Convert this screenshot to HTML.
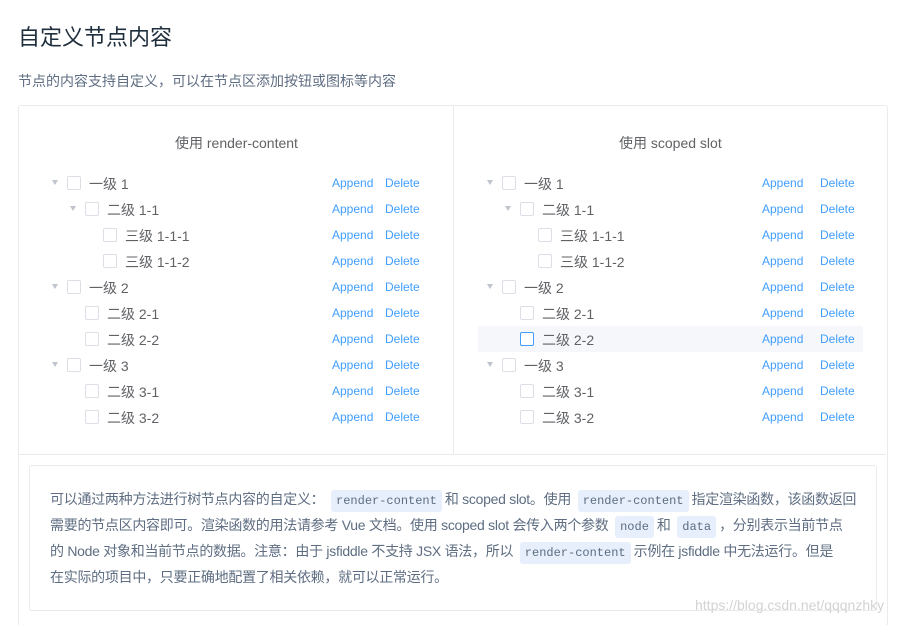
<!DOCTYPE html><html><head><meta charset="utf-8"><style>
html,body{margin:0;width:918px;height:625px;overflow:hidden}
body{background:#fff;font-family:"Liberation Sans","Noto Sans CJK SC",sans-serif;color:#606266;position:relative}
.a{position:absolute;white-space:nowrap}
h1{position:absolute;left:18px;top:20px;margin:0;font-size:22px;font-weight:normal;color:#1f2f3d}
.sub{left:18px;top:71px;font-size:14px;color:#5e6d82}
.box{position:absolute;left:18px;top:105px;width:868px;height:530px;border:1px solid #ebebeb;border-radius:3px}
.vd{position:absolute;left:453px;top:106px;width:1px;height:348px;background:#ebebeb}
.hd{position:absolute;left:19px;top:454px;width:867px;height:1px;background:#ebebeb}
.hdr{font-size:14px;top:133px;color:#606266}
.tri{position:absolute;width:0;height:0;border-left:3.5px solid transparent;border-right:3.5px solid transparent;border-top:5px solid #c0c4cc}
.cb{position:absolute;width:12px;height:12px;border:1px solid #dcdfe6;border-radius:2px;background:#fff}
.t{font-size:14px;color:#606266}
.l{font-size:12px;color:#409eff}
.tip{position:absolute;left:29px;top:465px;width:846px;height:144px;border:1px solid #ebebeb;border-radius:3px;background:#fff}
.tx{position:absolute;left:50px;top:486px;width:820px;font-size:14px;line-height:26px;color:#5e6d82;letter-spacing:-0.28px;white-space:nowrap}
code{font-family:"Liberation Mono",monospace;font-size:12px;background:#e6effb;color:#5e6d82;padding:4px 5px;border-radius:3px;margin:0 3px;line-height:1;letter-spacing:0}
</style></head><body>
<h1>自定义节点内容</h1>
<div class="a sub">节点的内容支持自定义，可以在节点区添加按钮或图标等内容</div>
<div class="box"></div><div class="vd"></div><div class="hd"></div>
<div class="a hdr" style="left:175px">使用 render-content</div>
<div class="a hdr" style="left:619px">使用 scoped slot</div>
<div style="position:absolute;left:478px;top:326px;width:385px;height:26px;background:#f5f7fa"></div>
<div class="tip"></div>
<div class="tx">可以通过两种方法进行树节点内容的自定义： <code>render-content</code>和 scoped slot。使用 <code>render-content</code>指定渲染函数，该函数返回<br>需要的节点区内容即可。渲染函数的用法请参考 Vue 文档。使用 scoped slot 会传入两个参数 <code>node</code>和 <code>data</code>，分别表示当前节点<br>的 Node 对象和当前节点的数据。注意：由于 jsfiddle 不支持 JSX 语法，所以 <code>render-content</code>示例在 jsfiddle 中无法运行。但是<br>在实际的项目中，只要正确地配置了相关依赖，就可以正常运行。</div>
<div class="a" style="left:695px;top:597px;font-size:14px;color:rgba(200,200,200,.8)">https://blog.csdn.net/qqqnzhky</div>
<script>
var rows=[[0,'一级 1',1],[1,'二级 1-1',1],[2,'三级 1-1-1',0],[2,'三级 1-1-2',0],[0,'一级 2',1],[1,'二级 2-1',0],[1,'二级 2-2',0],[0,'一级 3',1],[1,'二级 3-1',0],[1,'二级 3-2',0]];
var trees=[{ar:52,cb:67,tx:89,ap:332,dl:385},{ar:487,cb:502,tx:524,ap:762,dl:820}];
var h='';
trees.forEach(function(T,ti){rows.forEach(function(r,i){var c=183+26*i,o=r[0]*18;
if(r[2])h+='<div class="tri" style="left:'+(T.ar+o)+'px;top:'+(c-3)+'px"></div>';
var bc=(ti==1&&i==6)?'border-color:#409eff;':'';
h+='<div class="cb" style="'+bc+'left:'+(T.cb+o)+'px;top:'+(c-7)+'px"></div>';
h+='<div class="a t" style="left:'+(T.tx+o)+'px;top:'+(c-9)+'px">'+r[1]+'</div>';
h+='<div class="a l" style="left:'+T.ap+'px;top:'+(c-7)+'px">Append</div>';
h+='<div class="a l" style="left:'+T.dl+'px;top:'+(c-7)+'px">Delete</div>';});});
document.body.insertAdjacentHTML('beforeend',h);
</script>
</body></html>
